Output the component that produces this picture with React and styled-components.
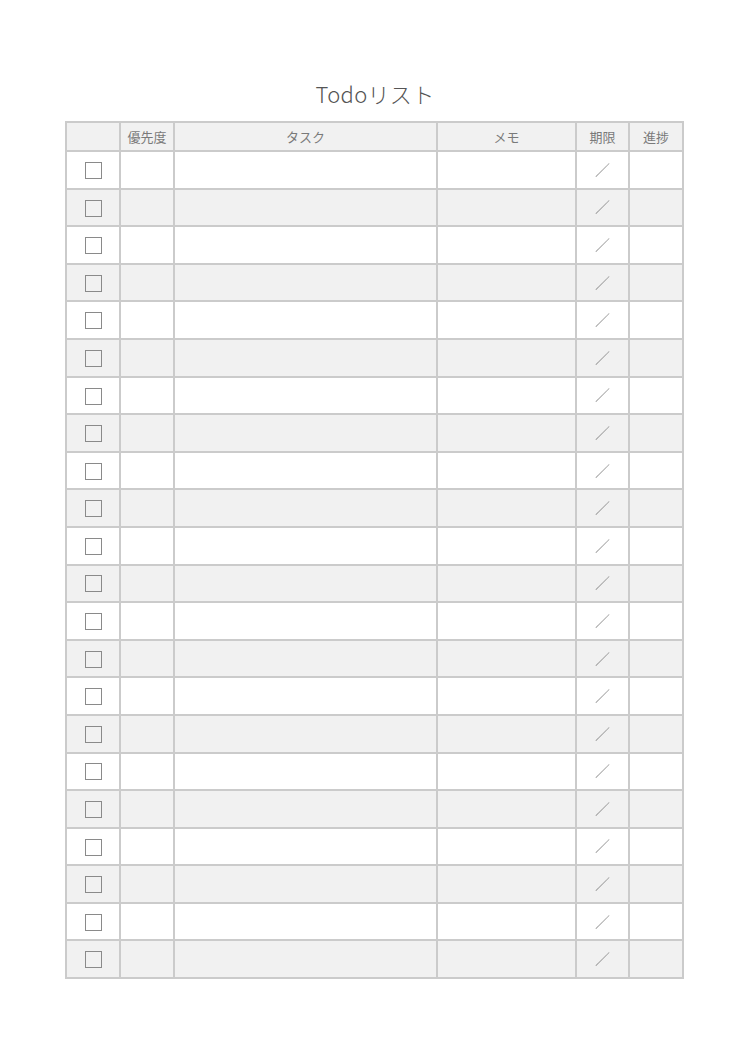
import React from 'react';
import styled, { createGlobalStyle } from 'styled-components';

const GlobalStyle = createGlobalStyle`
  body {
    margin: 0;
    background: #ffffff;
    font-family: 'Noto Sans CJK JP', 'Noto Sans', sans-serif;
    -webkit-font-smoothing: antialiased;
  }
`

const Page = styled.div`
  width: 750px;
  min-height: 1061px;
  padding-top: 77px;
  box-sizing: border-box;
  display: flex;
  flex-direction: column;
  align-items: center;
`

const Title = styled.h1`
  margin: 0 0 12px;
  height: 32px;
  line-height: 32px;
  font-size: 22px;
  font-weight: 300;
  color: #555555;
  letter-spacing: 0.3px;
`

const Sheet = styled.table`
  border-collapse: collapse;
  table-layout: fixed;
  width: 619px;
  margin-right: 1px;
`

const HeadCell = styled.th`
  height: 27px;
  padding: 0;
  border: 2px solid #cbcbcb;
  background: #f1f1f1;
  font-size: 13px;
  font-weight: 400;
  color: #7a7a7a;
  text-align: center;
`

const Row = styled.tr`
  background: ${(p) => (p.$shaded ? '#f1f1f1' : '#ffffff')};
`

const Cell = styled.td`
  height: 35.6px;
  padding: 0;
  border: 2px solid #cbcbcb;
  text-align: center;
  vertical-align: middle;
`

const Box = styled.span`
  display: inline-block;
  width: 15px;
  height: 15px;
  border: 1.5px solid #8a8a8a;
  vertical-align: middle;
  transform: translateY(-2px);
`

const Slash = styled.span`
  display: inline-block;
  font-size: 15px;
  font-weight: 300;
  color: #777777;
  will-change: transform;
  transform: translateY(-1px);
`

const columns = [
  { label: '', width: 54 },
  { label: '優先度', width: 54 },
  { label: 'タスク', width: 263 },
  { label: 'メモ', width: 139 },
  { label: '期限', width: 53 },
  { label: '進捗', width: 54 },
]

const rows = Array.from({ length: 22 }, (_, i) => i)

export default function App() {
  return (
    <>
      <GlobalStyle />
      <Page>
        <Title>Todoリスト</Title>
        <Sheet>
          <colgroup>
            {columns.map((c, i) => (
              <col key={i} style={{ width: c.width }} />
            ))}
          </colgroup>
          <thead>
            <tr>
              {columns.map((c, i) => (
                <HeadCell key={i}>{c.label}</HeadCell>
              ))}
            </tr>
          </thead>
          <tbody>
            {rows.map((r) => (
              <Row key={r} $shaded={r % 2 === 1}>
                <Cell><Box /></Cell>
                <Cell />
                <Cell />
                <Cell />
                <Cell><Slash>／</Slash></Cell>
                <Cell />
              </Row>
            ))}
          </tbody>
        </Sheet>
      </Page>
    </>
  )
}
